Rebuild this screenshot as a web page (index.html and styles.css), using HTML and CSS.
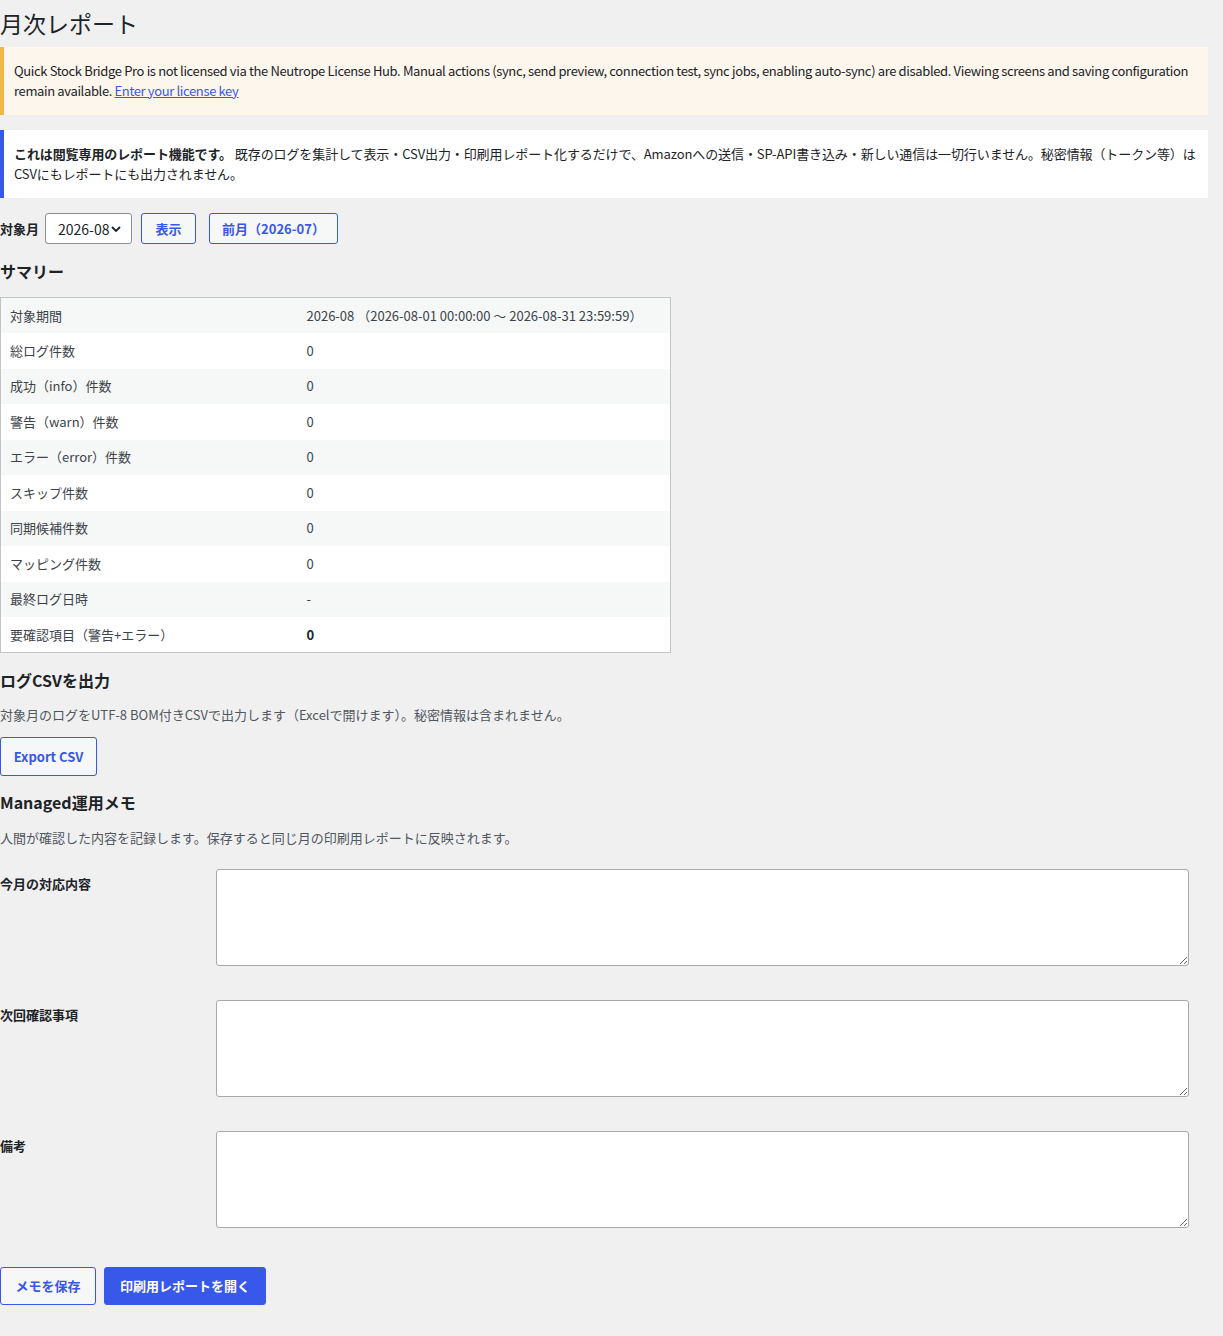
FILE: index.html
```html
<!DOCTYPE html>
<html lang="ja">
<head>
<meta charset="utf-8">
<title>月次レポート</title>
<link rel="stylesheet" href="styles.css">
</head>
<body>
<div class="wrap">
  <h1 class="page-title">月次レポート</h1>

  <div class="notice notice-warning">
    <p>Quick Stock Bridge Pro is not licensed via the Neutrope License Hub. Manual actions (sync, send preview, connection test, sync jobs, enabling auto-sync) are disabled. Viewing screens and saving configuration remain available. <a href="#">Enter your license key</a></p>
  </div>

  <div class="notice notice-info">
    <p><strong>これは閲覧専用のレポート機能です。</strong> 既存のログを集計して表示・CSV出力・印刷用レポート化するだけで、Amazonへの送信・SP-API書き込み・新しい通信は一切行いません。秘密情報（トークン等）はCSVにもレポートにも出力されません。</p>
  </div>

  <form class="month-row">
    <label class="month-label">対象月</label>
    <div class="select">
      <span>2026-08</span>
      <svg class="chev" width="12" height="12" viewBox="0 0 12 12"><path d="M2 4l4 4 4-4" fill="none" stroke="#1d2327" stroke-width="1.8"/></svg>
    </div>
    <button type="button" class="button btn-show">表示</button>
    <button type="button" class="button btn-prev">前月（2026-07）</button>
  </form>

  <h2 class="section-title">サマリー</h2>
  <table class="summary">
    <tbody>
      <tr><td class="k">対象期間</td><td>2026-08 （2026-08-01 00:00:00 〜 2026-08-31 23:59:59）</td></tr>
      <tr><td class="k">総ログ件数</td><td>0</td></tr>
      <tr><td class="k">成功（info）件数</td><td>0</td></tr>
      <tr><td class="k">警告（warn）件数</td><td>0</td></tr>
      <tr><td class="k">エラー（error）件数</td><td>0</td></tr>
      <tr><td class="k">スキップ件数</td><td>0</td></tr>
      <tr><td class="k">同期候補件数</td><td>0</td></tr>
      <tr><td class="k">マッピング件数</td><td>0</td></tr>
      <tr><td class="k">最終ログ日時</td><td>-</td></tr>
      <tr><td class="k">要確認項目（警告+エラー）</td><td><strong>0</strong></td></tr>
    </tbody>
  </table>

  <h2 class="section-title csv-title">ログCSVを出力</h2>
  <p class="desc desc-csv">対象月のログをUTF-8 BOM付きCSVで出力します（Excelで開けます）。秘密情報は含まれません。</p>
  <button type="button" class="button button-large btn-export">Export CSV</button>

  <h2 class="section-title memo-title">Managed運用メモ</h2>
  <p class="desc desc-memo">人間が確認した内容を記録します。保存すると同じ月の印刷用レポートに反映されます。</p>

  <div class="memo-grid">
    <label class="memo-label">今月の対応内容</label>
    <textarea class="memo-text"></textarea>
    <label class="memo-label">次回確認事項</label>
    <textarea class="memo-text"></textarea>
    <label class="memo-label">備考</label>
    <textarea class="memo-text"></textarea>
  </div>

  <div class="actions">
    <button type="button" class="button button-large btn-save">メモを保存</button>
    <button type="button" class="button button-large button-primary btn-print">印刷用レポートを開く</button>
  </div>
</div>
</body>
</html>
```

FILE: styles.css
```css
html, body {
  margin: 0;
  padding: 0;
  background: #f0f0f1;
}
body {
  color: #1d2327;
  font-family: "Noto Sans CJK JP", "Noto Sans", sans-serif;
  font-size: 13px;
  line-height: 20px;
}
.wrap {
  padding: 0 15px 40px 0;
}
.page-title {
  margin: 0;
  padding: 8px 0 4px;
  font-size: 23px;
  font-weight: 400;
  line-height: 30px;
}
.notice {
  margin: 5px 0 15px;
  padding: 14px 8px 14px 10px;
  border-left: 4px solid;
  letter-spacing: -0.1px;
}
.notice p {
  margin: 0;
}
.notice-warning {
  background: #fcf6ec;
  border-left-color: #f0b849;
  padding-right: 4px;
  letter-spacing: -0.36px;
}
.notice-info {
  background: #fff;
  border-left-color: #3858e9;
}
.notice a {
  color: #3858e9;
}
.month-row {
  display: flex;
  align-items: center;
  height: 31px;
  margin: 0;
}
.month-label {
  font-weight: 700;
  margin-right: 6px;
}
.select {
  box-sizing: border-box;
  width: 87px;
  height: 31px;
  display: flex;
  align-items: center;
  justify-content: space-between;
  padding: 0 9px 0 12px;
  background: #fff;
  border: 1px solid #8c8f94;
  border-radius: 3px;
  font-size: 14px;
}
.chev {
  display: block;
}
.button {
  box-sizing: border-box;
  height: 31px;
  padding: 0 12px;
  border: 1px solid #3858e9;
  border-radius: 3px;
  background: #f6f7f7;
  color: #3858e9;
  font-family: inherit;
  font-size: 13px;
  font-weight: 600;
  line-height: 20px;
  cursor: pointer;
}
.btn-show {
  width: 55px;
  margin-left: 9px;
}
.btn-prev {
  width: 129px;
  margin-left: 13px;
}
.section-title {
  margin: 15px 0 14px;
  font-size: 16px;
  font-weight: 700;
  line-height: 24px;
}
.summary {
  width: 671px;
  border-collapse: collapse;
  border: 1px solid #c3c4c7;
  background: #fff;
  color: #3c434a;
}
.summary td {
  height: 35.5px;
  box-sizing: border-box;
  padding: 0 10px 0 9px;
  vertical-align: middle;
}
.summary td.k {
  width: 306px;
  padding-right: 0;
}
.summary td:last-child {
  padding-left: 0;
}
.summary tr:nth-child(odd) {
  background: #f6f7f7;
}
.summary strong {
  color: #1d2327;
}
.csv-title {
  margin: 15px 0 0;
}
.desc {
  margin: 13px 0 12px;
  color: #50575e;
}
.desc-memo {
  margin: 14px 0 0;
}
.button-large {
  height: 39px;
  padding: 0 14px;
}
.btn-export {
  width: 97px;
  padding: 0;
}
.memo-title {
  margin: 14px 0 0;
  font-weight: 600;
}
.memo-grid + .actions {
  margin-top: 39px;
}
.memo-grid {
  display: grid;
  grid-template-columns: 216px 973px;
  grid-auto-rows: 97px;
  row-gap: 34px;
  margin-top: 21px;
}
.memo-label {
  font-weight: 700;
  padding-top: 5px;
}
.memo-text {
  box-sizing: border-box;
  width: 100%;
  height: 97px;
  margin: 0;
  border: 1px solid #a7aaad;
  border-radius: 3px;
  background: #fff;
  font-family: inherit;
  font-size: 14px;
  resize: vertical;
}
.actions {
  display: flex;
  gap: 8px;
}
.btn-save {
  width: 96px;
  height: 38px;
  padding: 0;
}
.btn-print {
  width: 162px;
  height: 38px;
  padding: 0;
}
.button-primary {
  background: #3858e9;
  color: #fff;
}
```
